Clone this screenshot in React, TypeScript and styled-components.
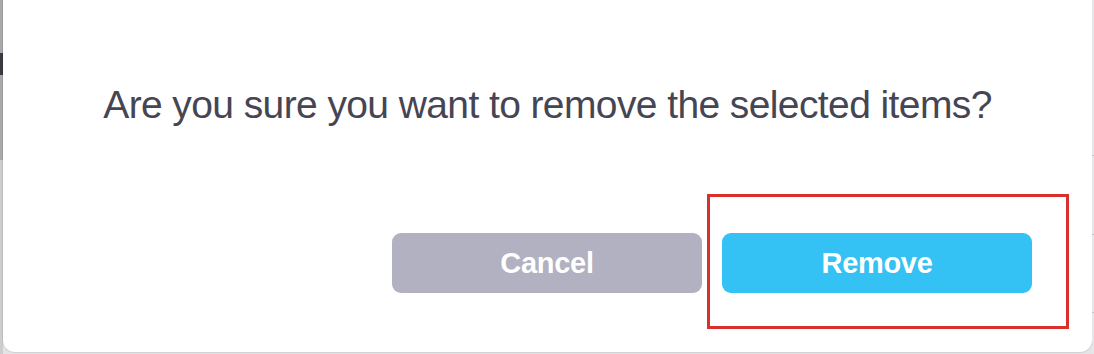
import React from 'react'
import styled, { createGlobalStyle } from 'styled-components'

const GlobalStyle = createGlobalStyle`
  html, body {
    margin: 0;
    padding: 0;
  }
  body {
    font-family: 'Liberation Sans', Arial, sans-serif;
    background: #e4e4e6;
  }
`

const Screen = styled.div`
  display: flex;
  height: 354px;
  overflow: hidden;
  background: #e4e4e6;
`

const Strip = styled.div<{ $width: number }>`
  width: ${({ $width }) => $width}px;
  flex-shrink: 0;
  display: flex;
  flex-direction: column;
`

const Band = styled.div<{ $height?: number; $tone: string }>`
  height: ${({ $height }) => ($height ? `${$height}px` : 'auto')};
  flex: ${({ $height }) => ($height ? '0 0 auto' : '1')};
  background: ${({ $tone }) => $tone};
`

const Dialog = styled.div`
  flex: 1;
  margin-bottom: 2px;
  background: #ffffff;
  border-radius: 0 0 12px 12px;
  box-shadow: 0 0 0 1px rgba(0, 0, 0, 0.08);
  display: flex;
  flex-direction: column;
  padding-top: 82px;
`

const Message = styled.p`
  margin: 0;
  text-align: center;
  font-size: 39px;
  line-height: 46px;
  letter-spacing: -0.6px;
  color: #464553;
  white-space: nowrap;
`

const Actions = styled.div`
  margin-top: 105px;
  padding-right: 60px;
  display: flex;
  justify-content: flex-end;
  gap: 20px;
`

const Button = styled.button<{ $variant: 'muted' | 'primary' }>`
  width: 310px;
  height: 60px;
  border: none;
  border-radius: 9px;
  background: ${({ $variant }) => ($variant === 'primary' ? '#34c1f3' : '#b1b1c1')};
  color: #ffffff;
  font-family: 'Liberation Sans', Arial, sans-serif;
  font-weight: 700;
  font-size: 29px;
  letter-spacing: -0.3px;
  padding: 0;
  cursor: pointer;
`

const Highlighted = styled.div`
  position: relative;
  display: flex;
`

const Marker = styled.span`
  position: absolute;
  top: -39px;
  bottom: -36px;
  left: -15px;
  right: -37px;
  border: 3px solid #d8312b;
  pointer-events: none;
`

const App: React.FC = () => {
  return (
    <>
      <GlobalStyle />
      <Screen>
        <Strip $width={3}>
          <Band $height={53} $tone="#a9a9ab" />
          <Band $height={22} $tone="#3a3a40" />
          <Band $height={85} $tone="#a9a9ab" />
          <Band $tone="#cdcdcf" />
        </Strip>
        <Dialog>
          <Message>Are you sure you want to remove the selected items?</Message>
          <Actions>
            <Button $variant="muted">Cancel</Button>
            <Highlighted>
              <Button $variant="primary">Remove</Button>
              <Marker />
            </Highlighted>
          </Actions>
        </Dialog>
        <Strip $width={2}>
          <Band $height={155} $tone="#e6e6e8" />
          <Band $height={1} $tone="#c4c4c6" />
          <Band $height={78} $tone="#e6e6e8" />
          <Band $height={1} $tone="#c4c4c6" />
          <Band $height={77} $tone="#e6e6e8" />
          <Band $height={1} $tone="#c4c4c6" />
          <Band $tone="#e6e6e8" />
        </Strip>
      </Screen>
    </>
  )
}

export default App
